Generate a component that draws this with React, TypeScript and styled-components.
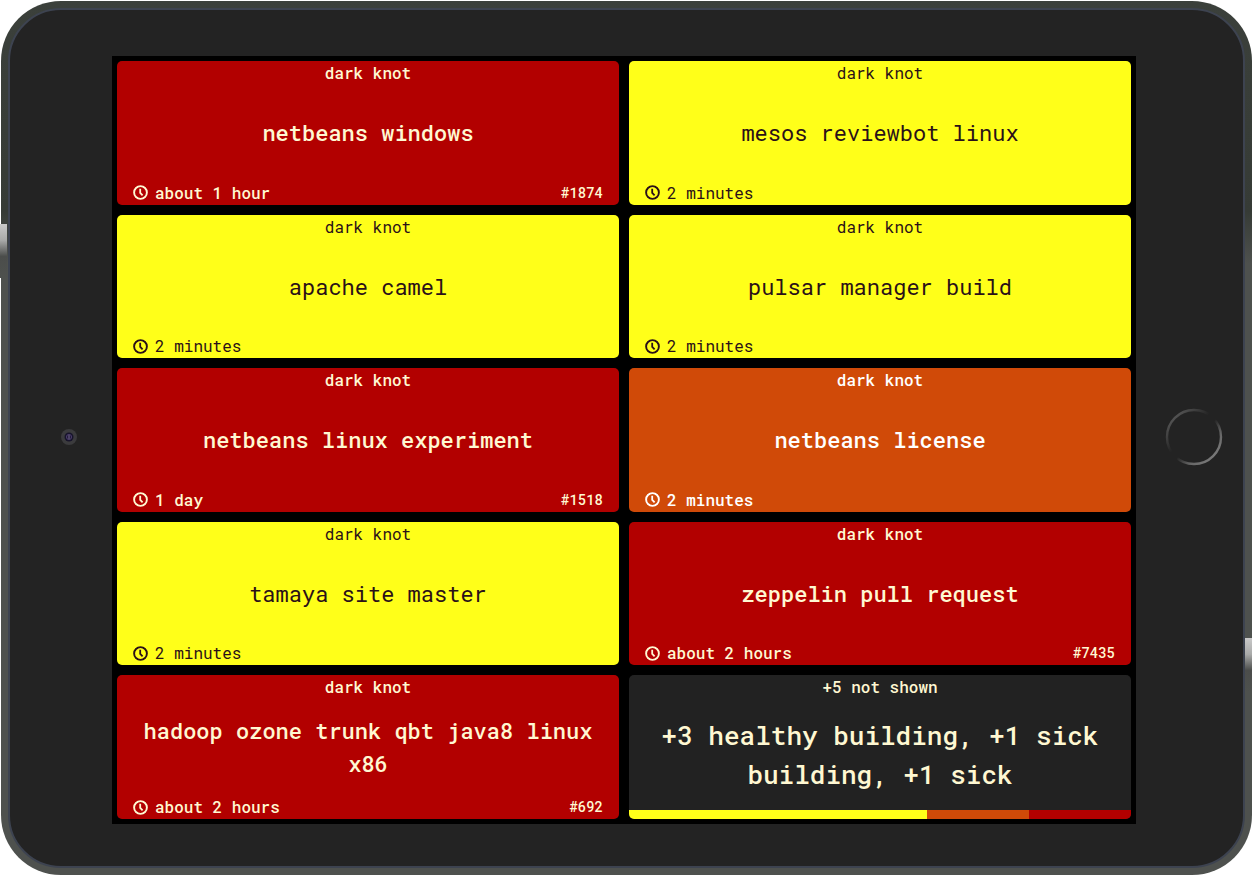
import React from 'react';
import styled, { createGlobalStyle, css } from 'styled-components';

const GlobalStyle = createGlobalStyle`
  * { box-sizing: border-box; }
  body {
    margin: 0;
    background: #fff;
    font-family: "Roboto Mono", "DejaVu Sans Mono", "Liberation Mono", monospace;
    -webkit-font-smoothing: antialiased;
  }
  h1, h2, p { margin: 0; }
`;

type Status = 'sick' | 'healthyBuilding' | 'sickBuilding' | 'summary';

const palette: Record<Status, { background: string; color: string; weight: number }> = {
  sick: { background: '#b20000', color: '#fff8d2', weight: 500 },
  healthyBuilding: { background: '#ffff19', color: '#2a1018', weight: 400 },
  sickBuilding: { background: '#d04a08', color: '#ffffff', weight: 500 },
  summary: { background: '#222222', color: '#fff8d2', weight: 500 },
};

const Device = styled.div`
  position: relative;
  display: flex;
  min-height: 100vh;
  padding: 1px 0 1px 1px;
  background: #fff;
`;

const Rim = styled.div`
  flex: 1;
  display: flex;
  padding: 7px;
  border-radius: 60px;
  background: linear-gradient(to bottom, #3b403b 0%, #363b36 24%, #4e514e 30%, #4e514e 100%);
  overflow: hidden;
`;

const Face = styled.div`
  flex: 1;
  display: grid;
  grid-template-columns: 102px minmax(0, 1fr) 107px;
  padding: 46px 0 42px;
  border: 2px solid #3d4350;
  border-radius: 53px;
  background: #232323;
`;

const SideGlint = styled.span<{ $side: 'left' | 'right' }>`
  position: absolute;
  width: 7px;
  height: 54px;
  background: linear-gradient(to bottom, #c9c9c9, #a9aaa9 30%, #4b4d4b 60%, #4e514e);
  ${({ $side }) =>
    $side === 'left'
      ? css`
          left: 0;
          top: 224px;
        `
      : css`
          right: 0;
          bottom: 184px;
        `}
`;

const CameraSide = styled.div`
  display: flex;
  align-items: center;
  padding: 0 0 6px 51px;
`;

const HomeSide = styled.div`
  display: flex;
  align-items: center;
  padding: 0 0 6px 29px;
`;

const HomeButton = styled.button`
  width: 58px;
  height: 58px;
  padding: 0;
  border: 0;
  border-radius: 50%;
  background: transparent;
`;

const Screen = styled.main`
  display: grid;
  grid-template-columns: repeat(2, minmax(0, 1fr));
  grid-template-rows: repeat(5, minmax(0, 1fr));
  gap: 10px;
  padding: 5px;
  background: #000;
`;

const Card = styled.article<{ $status: Status }>`
  display: flex;
  flex-direction: column;
  border-radius: 5px;
  overflow: hidden;
  background: ${({ $status }) => palette[$status].background};
  color: ${({ $status }) => palette[$status].color};
  font-weight: ${({ $status }) => palette[$status].weight};
  text-align: center;
`;

const CardHeader = styled.p`
  font-size: 16px;
  line-height: 24px;
`;

const Title = styled.h2<{ $large?: boolean }>`
  flex: 1;
  display: flex;
  align-items: center;
  justify-content: center;
  padding: 0 16px;
  font-size: ${({ $large }) => ($large ? 26 : 22)}px;
  font-weight: inherit;
  line-height: ${({ $large }) => ($large ? 39 : 33)}px;
`;

const CardFooter = styled.footer`
  display: flex;
  align-items: center;
  justify-content: space-between;
  padding: 0 16px;
  font-size: 16px;
  line-height: 24px;
`;

const Elapsed = styled.span`
  display: flex;
  align-items: center;
  gap: 7px;
`;

const BuildNumber = styled.span`
  font-size: 14px;
`;

const Distribution = styled.div`
  display: flex;
  height: 9px;
`;

const Segment = styled.span<{ $status: Status; $share: number }>`
  flex: ${({ $share }) => $share} 0 0;
  background: ${({ $status }) => palette[$status].background};
`;

const ClockIcon = () => (
  <svg width="15" height="15" viewBox="0 0 15 15" fill="none" stroke="currentColor" aria-hidden="true">
    <circle cx="7.5" cy="7.5" r="6.4" strokeWidth="1.9" />
    <path d="M7.2 3.7v4.1l2.4 2.6" strokeWidth="1.8" />
  </svg>
);

const Camera = () => (
  <svg width="16" height="16" viewBox="0 0 16 16" aria-hidden="true">
    <circle cx="8" cy="8" r="8" fill="#3b3b3d" />
    <circle cx="8" cy="8" r="4.5" fill="#17142b" />
    <circle cx="8" cy="8" r="2.6" fill="#211b39" stroke="#4a3c6a" strokeWidth="1" />
    <path d="M7 7h2M7 9h2" stroke="#8d82a5" strokeWidth="0.8" />
  </svg>
);

const HomeRing = () => (
  <svg width="58" height="58" viewBox="0 0 58 58" fill="none" aria-hidden="true">
    <defs>
      <linearGradient id="ring" x1="0.15" y1="0.15" x2="0.85" y2="0.85">
        <stop offset="0" stopColor="#505050" />
        <stop offset="0.4" stopColor="#232323" />
        <stop offset="0.55" stopColor="#232323" />
        <stop offset="0.8" stopColor="#666" />
        <stop offset="1" stopColor="#777" />
      </linearGradient>
    </defs>
    <circle cx="29" cy="29" r="27" stroke="url(#ring)" strokeWidth="2.4" />
  </svg>
);

interface Build {
  name: string;
  status: Status;
  elapsed: string;
  number?: string;
}

const builds: Build[] = [
  { name: 'netbeans windows', status: 'sick', elapsed: 'about 1 hour', number: '#1874' },
  { name: 'mesos reviewbot linux', status: 'healthyBuilding', elapsed: '2 minutes' },
  { name: 'apache camel', status: 'healthyBuilding', elapsed: '2 minutes' },
  { name: 'pulsar manager build', status: 'healthyBuilding', elapsed: '2 minutes' },
  { name: 'netbeans linux experiment', status: 'sick', elapsed: '1 day', number: '#1518' },
  { name: 'netbeans license', status: 'sickBuilding', elapsed: '2 minutes' },
  { name: 'tamaya site master', status: 'healthyBuilding', elapsed: '2 minutes' },
  { name: 'zeppelin pull request', status: 'sick', elapsed: 'about 2 hours', number: '#7435' },
  { name: 'hadoop ozone trunk qbt java8 linux x86', status: 'sick', elapsed: 'about 2 hours', number: '#692' },
];

const BuildCard = ({ build }: { build: Build }) => (
  <Card $status={build.status}>
    <CardHeader>dark knot</CardHeader>
    <Title>{build.name}</Title>
    <CardFooter>
      <Elapsed>
        <ClockIcon />
        {build.elapsed}
      </Elapsed>
      {build.number && <BuildNumber>{build.number}</BuildNumber>}
    </CardFooter>
  </Card>
);

export default function App() {
  return (
    <>
      <GlobalStyle />
      <Device>
        <Rim>
          <Face>
            <CameraSide>
              <Camera />
            </CameraSide>
            <Screen>
              {builds.map((build) => (
                <BuildCard key={build.name} build={build} />
              ))}
              <Card $status="summary">
                <CardHeader>+5 not shown</CardHeader>
                <Title $large>+3 healthy building, +1 sick building, +1 sick</Title>
                <Distribution>
                  <Segment $status="healthyBuilding" $share={297} />
                  <Segment $status="sickBuilding" $share={102} />
                  <Segment $status="sick" $share={102} />
                </Distribution>
              </Card>
            </Screen>
            <HomeSide>
              <HomeButton aria-label="Home">
                <HomeRing />
              </HomeButton>
            </HomeSide>
          </Face>
        </Rim>
        <SideGlint $side="left" />
        <SideGlint $side="right" />
      </Device>
    </>
  );
}
